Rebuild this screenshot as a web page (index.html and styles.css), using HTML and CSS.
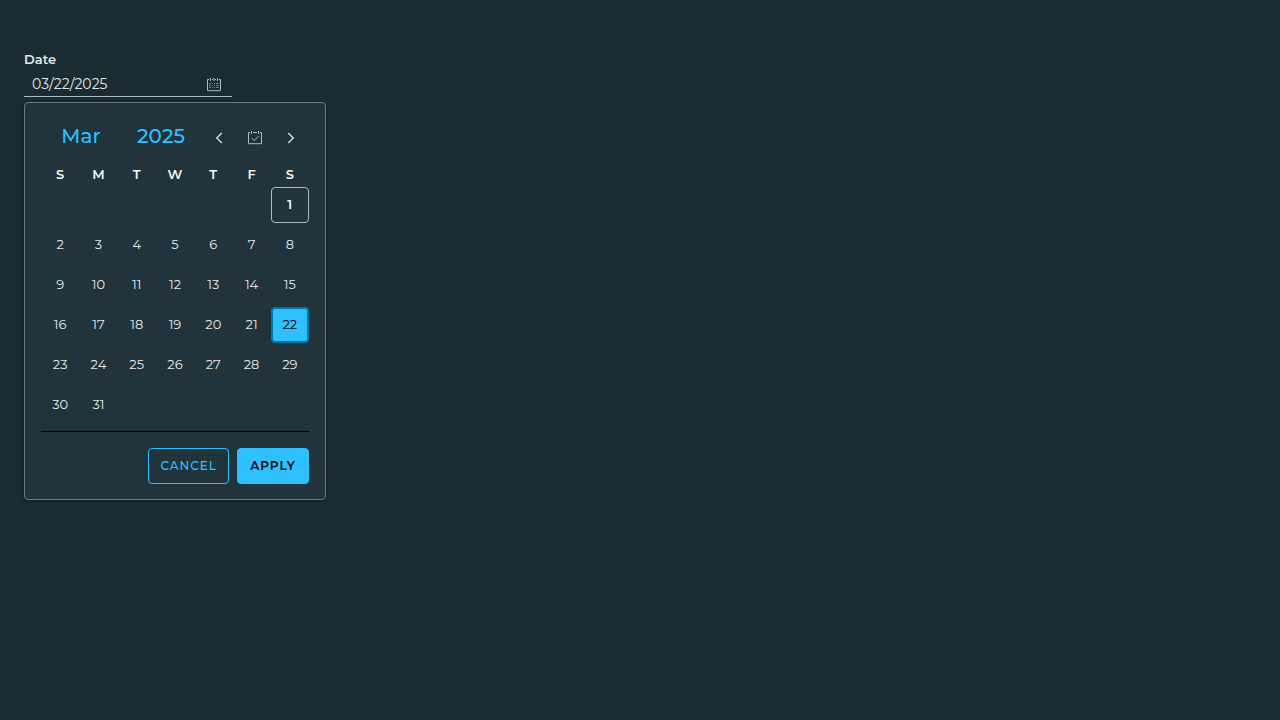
FILE: index.html
```html
<!DOCTYPE html>
<html lang="en">
<head>
<meta charset="utf-8">
<title>Date picker</title>
<link rel="stylesheet" href="styles.css">
</head>
<body>
<main class="page">
  <div class="field">
    <label class="field-label" for="date">Date</label>
    <div class="field-control">
      <input class="field-input" id="date" type="text" value="03/22/2025">
      <button class="icon-button field-toggle" type="button" aria-label="Toggle calendar">
        <svg class="icon" viewBox="0 0 16 16" aria-hidden="true">
          <path d="M3 2.5H1.5v11.2h13V2.5H13M6 2.5h1M9 2.5h1M4.5 1v3M8 1v3M11.5 1v3"/>
          <path class="icon-dots" d="M3 6.5h2M6 6.5h1M8 6.5h1M10 6.5h3M3 8.5h2M6 8.5h1M8 8.5h1M10 8.5h3M3 10.5h2M6 10.5h1M8 10.5h1M10 10.5h3"/>
        </svg>
      </button>
    </div>
  </div>
  <section class="picker" aria-label="Choose date">
    <header class="picker-header">
      <button class="period" type="button">Mar</button>
      <button class="period" type="button">2025</button>
      <button class="icon-button" type="button" aria-label="Previous month">
        <svg class="icon chevron" viewBox="0 0 16 16" aria-hidden="true"><path d="M10.8 3 5.8 8l5 5"/></svg>
      </button>
      <button class="icon-button" type="button" aria-label="Current month">
        <svg class="icon" viewBox="0 0 16 16" aria-hidden="true"><path d="M3 2.5H1.5v11.2h13V2.5H13M6 2.5h4M4.5 1v3M11.5 1v3M5 8.2l2.2 2.3L11.5 6.2"/></svg>
      </button>
      <button class="icon-button" type="button" aria-label="Next month">
        <svg class="icon chevron" viewBox="0 0 16 16" aria-hidden="true"><path d="M5.2 3l5 5-5 5"/></svg>
      </button>
    </header>
    <table class="calendar">
      <thead>
        <tr><th scope="col">S</th><th scope="col">M</th><th scope="col">T</th><th scope="col">W</th><th scope="col">T</th><th scope="col">F</th><th scope="col">S</th></tr>
      </thead>
      <tbody>
        <tr><td></td><td></td><td></td><td></td><td></td><td></td><td><button class="day day-today" type="button">1</button></td></tr>
        <tr><td><button class="day" type="button">2</button></td><td><button class="day" type="button">3</button></td><td><button class="day" type="button">4</button></td><td><button class="day" type="button">5</button></td><td><button class="day" type="button">6</button></td><td><button class="day" type="button">7</button></td><td><button class="day" type="button">8</button></td></tr>
        <tr><td><button class="day" type="button">9</button></td><td><button class="day" type="button">10</button></td><td><button class="day" type="button">11</button></td><td><button class="day" type="button">12</button></td><td><button class="day" type="button">13</button></td><td><button class="day" type="button">14</button></td><td><button class="day" type="button">15</button></td></tr>
        <tr><td><button class="day" type="button">16</button></td><td><button class="day" type="button">17</button></td><td><button class="day" type="button">18</button></td><td><button class="day" type="button">19</button></td><td><button class="day" type="button">20</button></td><td><button class="day" type="button">21</button></td><td><button class="day day-selected" type="button" aria-pressed="true">22</button></td></tr>
        <tr><td><button class="day" type="button">23</button></td><td><button class="day" type="button">24</button></td><td><button class="day" type="button">25</button></td><td><button class="day" type="button">26</button></td><td><button class="day" type="button">27</button></td><td><button class="day" type="button">28</button></td><td><button class="day" type="button">29</button></td></tr>
        <tr><td><button class="day" type="button">30</button></td><td><button class="day" type="button">31</button></td><td></td><td></td><td></td><td></td><td></td></tr>
      </tbody>
    </table>
    <footer class="picker-actions">
      <button class="button button-outline" type="button">CANCEL</button>
      <button class="button button-primary" type="button">APPLY</button>
    </footer>
  </section>
</main>
</body>
</html>
```

FILE: styles.css
```css
*, *::before, *::after { box-sizing: border-box; }

body {
  margin: 0;
  background: #1b2b32;
  color: #e3eaed;
  font: 400 13px/20px Metropolis, Montserrat, Inter, "Liberation Sans", sans-serif;
}

button, input {
  margin: 0;
  padding: 0;
  border: 0;
  background: none;
  color: inherit;
  font: inherit;
}

button { cursor: pointer; }

.page { padding: 49px 24px 24px; }

.field {
  width: 208px;
  max-width: 100%;
}

.field-label {
  display: block;
  font-weight: 600;
}

.field-control {
  display: flex;
  align-items: center;
  height: 28px;
  border-bottom: 1px solid #adbbc4;
}

.field-input {
  flex: 1;
  min-width: 0;
  padding: 2px 0 0 8px;
  font-size: 14px;
  outline: none;
}

.icon-button {
  display: flex;
  align-items: center;
  justify-content: center;
  height: 36px;
  color: #adbbc4;
}

.field-toggle {
  width: 36px;
  height: 26px;
  padding-top: 4px;
}

.icon {
  width: 16px;
  height: 16px;
  fill: none;
  stroke: currentColor;
  stroke-width: 1;
}

.icon-dots { opacity: 0.55; }

.chevron {
  stroke: #d0d9dd;
  stroke-width: 1.5;
}

.picker {
  width: 302px;
  max-width: 100%;
  margin-top: 5px;
  padding: 15px 16px;
  border: 1px solid #6a7a81;
  border-radius: 4px;
  background: #21333b;
  box-shadow: 0 1px 3px #12191d;
}

.picker-header {
  display: grid;
  grid-template-columns: 80fr 80fr 36fr 36fr 36fr;
  align-items: center;
  padding-top: 2px;
}

.period {
  height: 36px;
  padding-bottom: 4px;
  color: #2ec0ff;
  font-size: 20px;
  font-weight: 500;
  line-height: 24px;
}

.calendar {
  width: 100%;
  margin-top: 7px;
  border-collapse: collapse;
  table-layout: fixed;
}

.calendar th {
  height: 24px;
  padding: 0 0 2px;
  color: #f3f6f7;
  font-weight: 600;
}

.calendar td {
  height: 40px;
  padding: 0;
  vertical-align: top;
}

.day {
  display: block;
  width: 100%;
  height: 36px;
  padding-bottom: 2px;
  border-radius: 4px;
  text-align: center;
}

.day-today {
  border: 1px solid #adbbc4;
  color: #f3f6f7;
  font-weight: 600;
}

.day-selected {
  border: 2px solid #0079ad;
  background: #2ec0ff;
  color: #000;
}

.picker-actions {
  display: flex;
  justify-content: flex-end;
  gap: 8px;
  margin-top: 4px;
  padding-top: 16px;
  border-top: 1px solid #000;
}

.button {
  min-width: 72px;
  height: 36px;
  padding: 0 11px;
  border: 1px solid #2ec0ff;
  border-radius: 4px;
  font-size: 12px;
  font-weight: 500;
  letter-spacing: 1px;
}

.button-outline { color: #2ec0ff; }

.button-primary {
  background: #2ec0ff;
  color: #000;
  font-weight: 600;
}
```
